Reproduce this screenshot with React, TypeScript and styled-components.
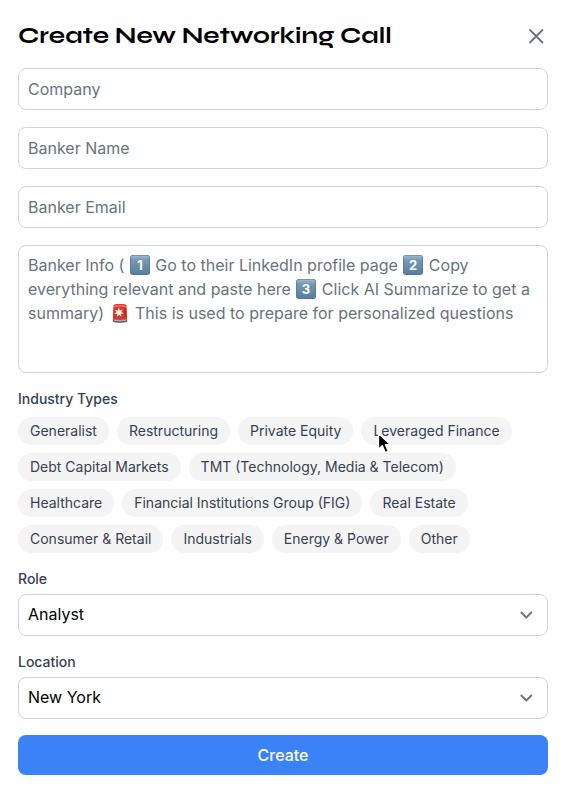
import React, { useState } from "react";
import styled, { createGlobalStyle } from "styled-components";

const GlobalStyle = createGlobalStyle`
  *, *::before, *::after { box-sizing: border-box; }
  body {
    margin: 0;
    background: #fefefe;
    color: #000;
    font-family: Inter, "Liberation Sans", sans-serif;
    font-size: 16px;
    line-height: 24px;
  }
  button, input, select, textarea { font: inherit; color: inherit; }
`;

const Dialog = styled.main`
  padding: 18px 14px 24px 18px;
`;

const Header = styled.header`
  display: flex;
  align-items: center;
  justify-content: space-between;
  margin-bottom: 14px;
`;

const Title = styled.h1`
  margin: 0;
  font-family: Syne, "DejaVu Sans", sans-serif;
  font-size: 24px;
  line-height: 36px;
  font-weight: 700;
`;

const CloseButton = styled.button`
  display: flex;
  padding: 0;
  border: 0;
  background: none;
  color: #6b7280;
  cursor: pointer;
`;

const Form = styled.form`
  display: flex;
  flex-direction: column;
  gap: 16px;
`;

const Fields = styled.div`
  display: flex;
  flex-direction: column;
  gap: 17px;
`;

const TextField = styled.input`
  width: 100%;
  height: 42px;
  padding: 8px 9px;
  border: 1px solid #d1d5db;
  border-radius: 8px;
  background: #fff;
  &::placeholder { color: #6b7280; opacity: 1; }
`;

const InfoField = styled.div`
  display: grid;
`;

const InfoArea = styled.textarea`
  grid-area: 1 / 1;
  width: 100%;
  height: 128px;
  padding: 7px 9px;
  border: 1px solid #d1d5db;
  border-radius: 8px;
  background: #fff;
  resize: none;
`;

const InfoHint = styled.div`
  grid-area: 1 / 1;
  padding: 8px 10px;
  color: #6b7280;
  pointer-events: none;
`;

const EmojiSvg = styled.svg`
  display: inline-block;
  width: 20px;
  height: 20px;
  margin: 0 1px;
  vertical-align: -4px;
`;

const Group = styled.fieldset`
  min-width: 0;
  margin: 0;
  padding: 0;
  border: 0;
`;

const Legend = styled.legend`
  padding: 0;
  margin-bottom: 8px;
  color: #374151;
  font-size: 14px;
  line-height: 20px;
  font-weight: 500;
`;

const Chips = styled.div`
  display: flex;
  flex-wrap: wrap;
  gap: 8px;
`;

const Chip = styled.button<{ $active: boolean }>`
  position: relative;
  padding: 4px 12px;
  border: 0;
  border-radius: 14px;
  background: ${(p) => (p.$active ? "#3b82f6" : "#f4f4f5")};
  color: ${(p) => (p.$active ? "#fff" : "#374151")};
  font-size: 14px;
  line-height: 20px;
  cursor: pointer;
`;

const Pointer = styled.svg`
  position: absolute;
  left: 16px;
  top: 15px;
  z-index: 1;
  width: 15px;
  height: 24px;
  pointer-events: none;
`;

const Labelled = styled.div`
  display: flex;
  flex-direction: column;
  gap: 5px;
`;

const Label = styled.label`
  color: #374151;
  font-size: 14px;
  line-height: 20px;
  font-weight: 500;
`;

const SelectWrap = styled.div`
  display: grid;
  align-items: center;
`;

const Select = styled.select`
  grid-area: 1 / 1;
  appearance: none;
  width: 100%;
  height: 42px;
  padding: 7px 40px 9px 9px;
  border: 1px solid #d1d5db;
  border-radius: 8px;
  background: #fff;
`;

const Chevron = styled.svg`
  grid-area: 1 / 1;
  justify-self: end;
  width: 20px;
  height: 20px;
  margin-right: 12px;
  color: #6b7280;
  pointer-events: none;
`;

const SubmitButton = styled.button`
  height: 40px;
  border: 0;
  border-radius: 8px;
  background: #3b82f6;
  color: #fff;
  font-weight: 500;
  cursor: pointer;
`;

const industries = [
  "Generalist",
  "Restructuring",
  "Private Equity",
  "Leveraged Finance",
  "Debt Capital Markets",
  "TMT (Technology, Media & Telecom)",
  "Healthcare",
  "Financial Institutions Group (FIG)",
  "Real Estate",
  "Consumer & Retail",
  "Industrials",
  "Energy & Power",
  "Other",
];

function Keycap({ digit }: { digit: number }) {
  const id = `keycap-${digit}`;
  return (
    <EmojiSvg viewBox="0 0 20 20" role="img" aria-label={`Step ${digit}`}>
      <defs>
        <linearGradient id={id} x1="0" y1="0" x2="0" y2="1">
          <stop offset="0" stopColor="#9bb9d0" />
          <stop offset="0.25" stopColor="#7798b5" />
          <stop offset="1" stopColor="#587f9f" />
        </linearGradient>
      </defs>
      <rect width="20" height="20" rx="3" fill="#537592" />
      <rect x="0.7" y="0.5" width="18.6" height="18.5" rx="2.5" fill={`url(#${id})`} />
      <text x="10" y="14.5" textAnchor="middle" fontFamily="Inter, sans-serif" fontSize="13" fontWeight="700" fill="#fff">
        {digit}
      </text>
    </EmojiSvg>
  );
}

function Siren() {
  return (
    <EmojiSvg viewBox="0 0 20 20" role="img" aria-label="Important">
      <path d="M3 15h14l.3 3c0 1-2 1.700-7.300 1.700S2.700 19 2.700 18z" fill="#69616a" />
      <path d="M3.500 16.500h13v.8c-2 1.200-11 1.200-13 0z" fill="#b5adb0" />
      <path d="M3.500 2.500C4 1.200 6 1 10 1s6 .2 6.500 1.500l.7 12.500c-2 2.200-12.400 2.200-14.400 0z" fill="#dd352a" />
      <path d="M4 2.800c3-1.300 9-1.300 12 0l.1 1.700c-3-1-9-1-12.200 0z" fill="#ef6a5f" />
      <path d="m9 4.500.8 3 2.900-1.100-1.400 2.500 2.600 1.400-2.900.5.300 2.900-2.300-1.900-2.100 2.100.3-3-3-.2 2.500-1.700-2-2.300 2.900.7z" fill="#fff0e9" />
      <path d="M14.800 5 15.600 14" stroke="#b0241e" strokeWidth="1.200" />
    </EmojiSvg>
  );
}

function MousePointer() {
  return (
    <Pointer viewBox="0 0 15 24" aria-hidden="true">
      <path
        d="M1.500 1.500v15.800l3.800-3.500 3 6.700 3-1.400-3-6.400h5.200z"
        fill="#000"
        stroke="#fff"
        strokeWidth="1.300"
        strokeLinejoin="round"
      />
    </Pointer>
  );
}

function SelectField({ id, label, options }: { id: string; label: string; options: string[] }) {
  return (
    <Labelled>
      <Label htmlFor={id}>{label}</Label>
      <SelectWrap>
        <Select id={id} defaultValue={options[0]}>
          {options.map((o) => (
            <option key={o}>{o}</option>
          ))}
        </Select>
        <Chevron viewBox="0 0 20 20" fill="none" stroke="currentColor" strokeWidth="1.800" strokeLinecap="round" strokeLinejoin="round" aria-hidden="true">
          <path d="m5.300 7.500 5 5 5-5" />
        </Chevron>
      </SelectWrap>
    </Labelled>
  );
}

export default function App() {
  const [info, setInfo] = useState("");
  const [selected, setSelected] = useState<string[]>([]);
  const toggle = (name: string) =>
    setSelected((s) => (s.includes(name) ? s.filter((n) => n !== name) : [...s, name]));

  return (
    <>
      <GlobalStyle />
      <Dialog>
        <Header>
          <Title>Create New Networking Call</Title>
          <CloseButton type="button" aria-label="Close">
            <svg width="24" height="24" viewBox="0 0 24 24" fill="none" stroke="currentColor" strokeWidth="1.800" strokeLinecap="round" aria-hidden="true">
              <path d="M6 6l12.500 12.500M18.500 6L6 18.500" />
            </svg>
          </CloseButton>
        </Header>
        <Form onSubmit={(e) => e.preventDefault()}>
          <Fields>
            <TextField type="text" placeholder="Company" aria-label="Company" />
            <TextField type="text" placeholder="Banker Name" aria-label="Banker Name" />
            <TextField type="email" placeholder="Banker Email" aria-label="Banker Email" />
            <InfoField>
              <InfoArea
                aria-label="Banker Info"
                aria-describedby="banker-info-hint"
                value={info}
                onChange={(e) => setInfo(e.target.value)}
              />
              {info === "" && (
                <InfoHint id="banker-info-hint">
                  Banker Info ( <Keycap digit={1} /> Go to their LinkedIn profile page <Keycap digit={2} /> Copy
                  everything relevant and paste here <Keycap digit={3} /> Click AI Summarize to get a
                  summary) <Siren /> This is used to prepare for personalized questions
                </InfoHint>
              )}
            </InfoField>
          </Fields>
          <Group>
            <Legend>Industry Types</Legend>
            <Chips>
              {industries.map((name) => (
                <Chip
                  key={name}
                  type="button"
                  $active={selected.includes(name)}
                  aria-pressed={selected.includes(name)}
                  onClick={() => toggle(name)}
                >
                  {name}
                  {name === "Leveraged Finance" && <MousePointer />}
                </Chip>
              ))}
            </Chips>
          </Group>
          <SelectField id="role" label="Role" options={["Analyst", "Associate", "Vice President"]} />
          <SelectField id="location" label="Location" options={["New York", "San Francisco", "Chicago"]} />
          <SubmitButton type="submit">Create</SubmitButton>
        </Form>
      </Dialog>
    </>
  );
}
